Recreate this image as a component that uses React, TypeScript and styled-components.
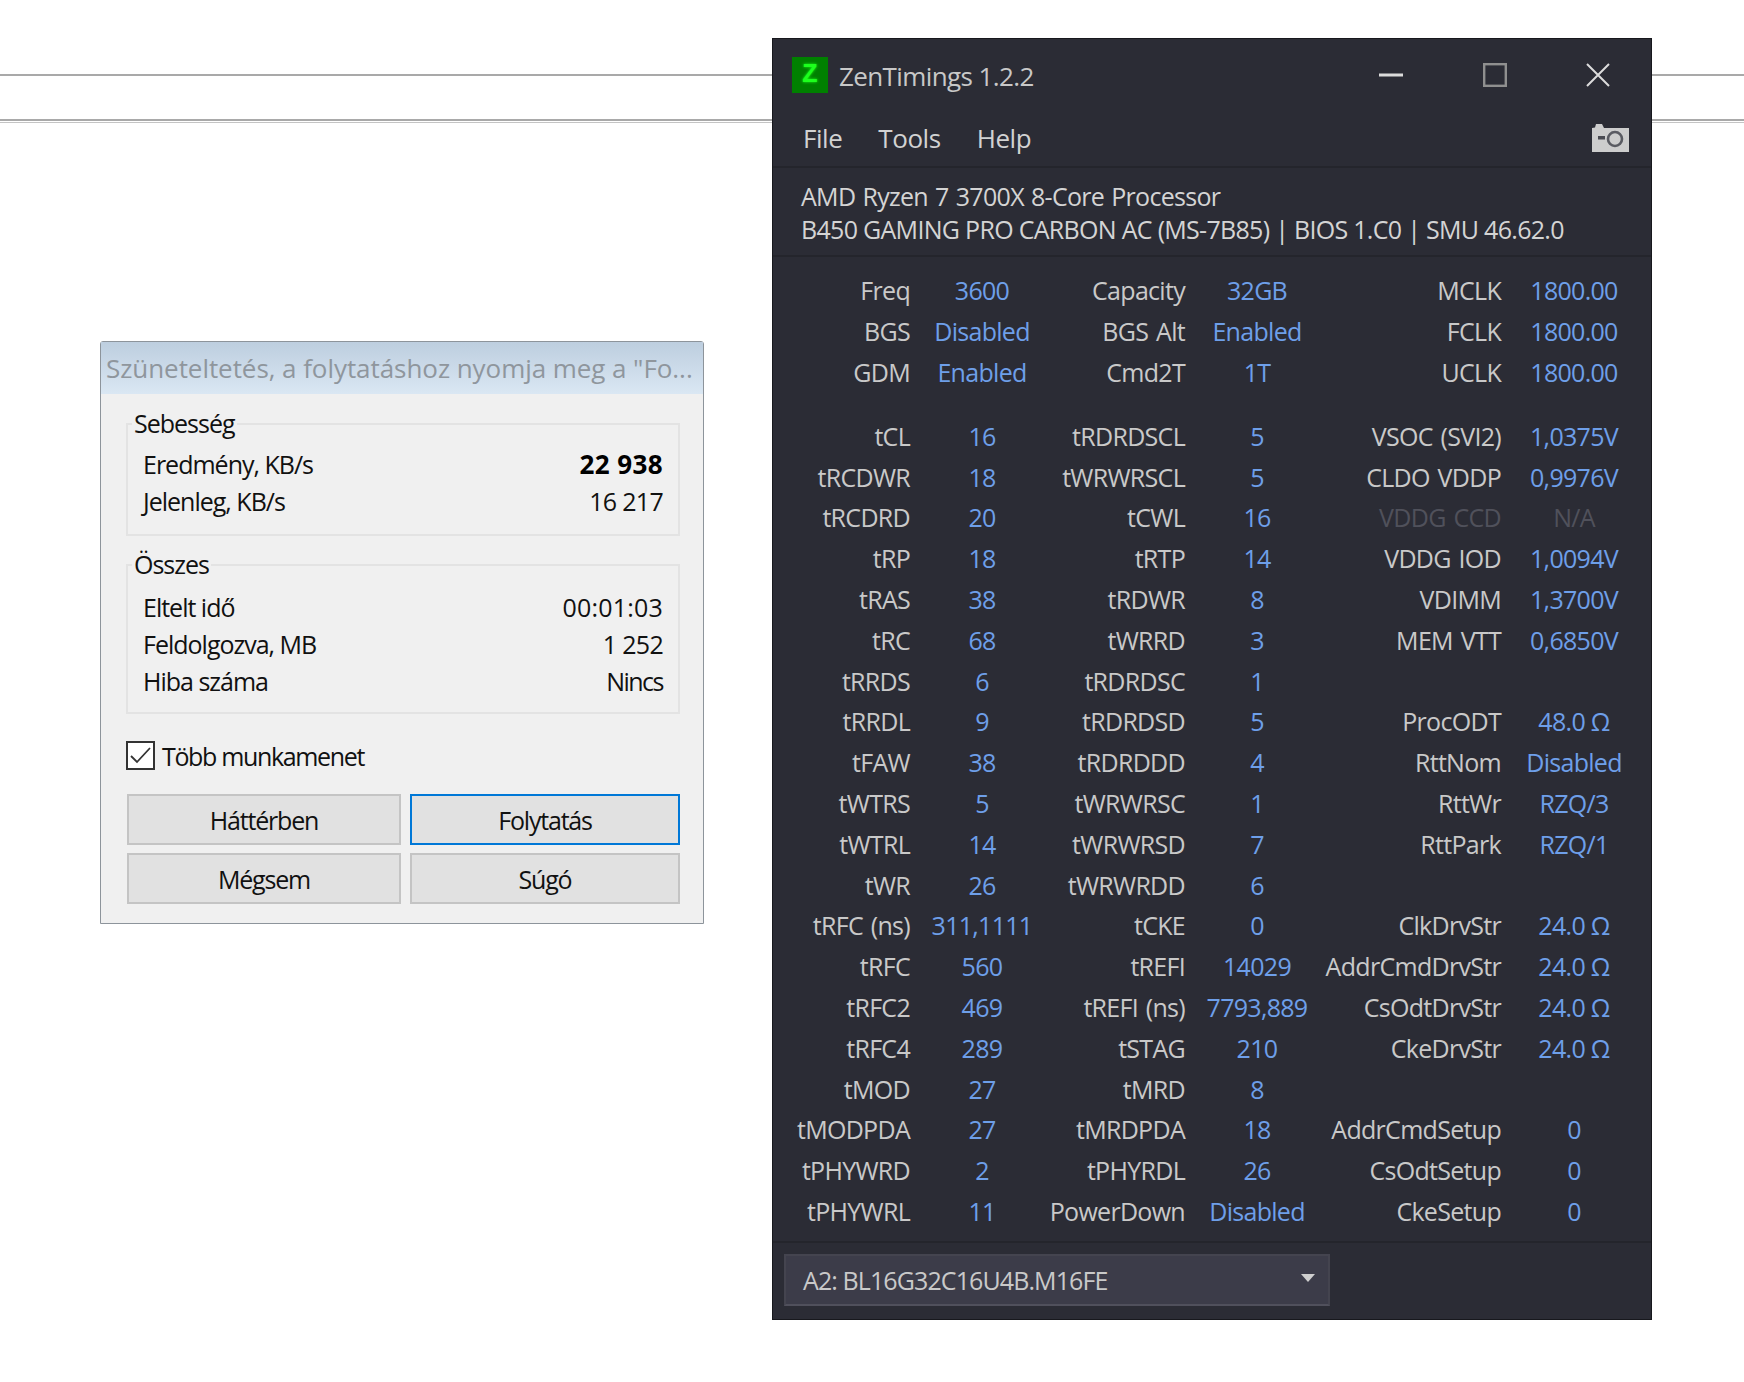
import React from "react";
import styled, { createGlobalStyle } from "styled-components";

const GlobalStyle = createGlobalStyle`
  html, body {
    margin: 0;
    padding: 0;
    background: #fff;
  }
`;

const FONT = `"Open Sans", "Noto Sans", sans-serif`;

const Page = styled.div`
  width: 1744px;
  height: 1382px;
  overflow: hidden;
  display: flex;
  align-items: flex-start;
  font-family: ${FONT};
  background:
    linear-gradient(#a9a9a9, #a9a9a9) 0 74px / 100% 2px no-repeat,
    linear-gradient(#a9a9a9, #a9a9a9) 0 119px / 100% 2px no-repeat,
    linear-gradient(#c4c4c4, #c4c4c4) 0 122px / 100% 1px no-repeat,
    #fff;
`;

/* left dialog */
const Dialog = styled.div`
  width: 604px;
  height: 583px;
  margin: 341px 0 0 100px;
  box-sizing: border-box;
  border: 1px solid #8d949b;
  border-radius: 3px 3px 0 0;
  background: #f0f0f0;
  color: #111;
  font-size: 25px;
  letter-spacing: -1px;
  display: flex;
  flex-direction: column;
`;

const DialogTitle = styled.div`
  height: 52px;
  line-height: 52px;
  padding-left: 5px;
  background: linear-gradient(#bdcedf, #dae7f3);
  color: #8f969d;
  font-size: 26px;
  letter-spacing: -0.06px;
  white-space: nowrap;
  overflow: hidden;
`;

const DialogBody = styled.div`
  padding: 29px 23px 0 25px;
  display: flex;
  flex-direction: column;
`;

const Group = styled.div<{ $gap?: number; $shift?: number }>`
  position: relative;
  margin-top: ${(p) => p.$gap ?? 0}px;
  border: 2px solid #e3e3e3;
  padding: ${(p) => 21 + (p.$shift ?? 0)}px 15px ${(p) => 14 - (p.$shift ?? 0)}px 15px;
`;

const Legend = styled.span`
  position: absolute;
  left: 4px;
  top: -19px;
  padding: 0 2px;
  background: #f0f0f0;
  line-height: 34px;
`;

const StatRow = styled.div`
  display: flex;
  justify-content: space-between;
  height: 37px;
  line-height: 37px;
`;

const StatValue = styled.span<{ $bold?: boolean; $track?: number }>`
  font-weight: ${(p) => (p.$bold ? 700 : 400)};
  font-size: ${(p) => (p.$bold ? "26px" : "inherit")};
  letter-spacing: ${(p) => (p.$bold ? "0.4px" : `${p.$track ?? -0.7}px`)};
  color: ${(p) => (p.$bold ? "#000" : "inherit")};
`;

const CheckRow = styled.label`
  display: flex;
  align-items: center;
  gap: 7px;
  margin-top: 27px;
  height: 29px;
  letter-spacing: -1.35px;
`;

const CheckBox = styled.span`
  width: 29px;
  height: 29px;
  box-sizing: border-box;
  border: 2px solid #333;
  background: #fff;
  display: flex;
  align-items: center;
  justify-content: center;
`;

const ButtonGrid = styled.div`
  display: grid;
  grid-template-columns: 274px 270px;
  grid-auto-rows: 51px;
  column-gap: 9px;
  row-gap: 8px;
  margin-top: 24px;
  margin-left: 1px;
`;

const DlgButton = styled.button<{ $focus?: boolean }>`
  font: inherit;
  letter-spacing: -1.2px;
  color: #111;
  background: #e1e1e1;
  border: ${(p) => (p.$focus ? "2px solid #0078d7" : "2px solid #c4c4c4")};
  padding: 0;
`;

/* ZenTimings window */
const Win = styled.div`
  width: 880px;
  height: 1282px;
  margin: 38px 0 0 68px;
  box-sizing: border-box;
  background: #2b2c35;
  border: 1px solid #17181d;
  color: #cfcfcf;
  font-size: 25px;
  letter-spacing: -0.7px;
  display: flex;
  flex-direction: column;
`;

const TitleBar = styled.div`
  height: 72px;
  flex: none;
  display: flex;
  align-items: center;
  padding: 0 0 0 19px;
  box-sizing: border-box;
`;

const Logo = styled.span`
  width: 36px;
  height: 36px;
  margin-top: -1px;
  background: #008000;
  color: #1dff1d;
  font-family: "Liberation Sans", sans-serif;
  font-weight: 700;
  font-size: 25px;
  line-height: 33px;
  letter-spacing: 0;
  text-align: center;
  text-shadow: 0 0 3px #17ff17;
`;

const TitleText = styled.span`
  margin-left: 11px;
  margin-top: 1px;
  flex: 1;
  font-size: 26px;
  letter-spacing: -0.6px;
  color: #c8c8c8;
`;

const WinControls = styled.div`
  display: flex;
  align-items: center;
`;

const WinControl = styled.span`
  width: 104px;
  display: flex;
  justify-content: center;
  &:last-child {
    width: 102px;
    margin-right: 2px;
  }
`;

const MenuBar = styled.div`
  height: 54px;
  flex: none;
  display: flex;
  align-items: center;
  padding: 0 22px 1px 30px;
  gap: 36px;
  font-size: 26px;
  letter-spacing: -0.45px;
  color: #d2d2d2;
  border-bottom: 2px solid #24252c;
`;

const MenuItem = styled.span``;

const CameraSlot = styled.span`
  margin-left: auto;
  display: flex;
`;

const InfoBlock = styled.div`
  height: 89px;
  flex: none;
  box-sizing: border-box;
  padding: 12px 0 0 28px;
  line-height: 33px;
  color: #d4d4d4;
  border-bottom: 2px solid #24252c;
  white-space: nowrap;
`;

const InfoLine = styled.div<{ $words?: number }>`
  word-spacing: ${(p) => p.$words ?? 0}px;
`;

const Timings = styled.div<{ $top: number }>`
  display: grid;
  grid-template-columns: 137px 144px 131px 144px 172px 146px;
  grid-auto-rows: 40.8px;
  margin-top: ${(p) => p.$top}px;
  align-items: center;
  white-space: nowrap;
  flex: none;
`;

const Label = styled.span<{ $dim?: boolean }>`
  display: flex;
  justify-content: flex-end;
  word-spacing: 2px;
  color: ${(p) => (p.$dim ? "#50515b" : "#c9c9c9")};
`;

const Value = styled.span<{ $dim?: boolean }>`
  display: flex;
  justify-content: center;
  color: ${(p) => (p.$dim ? "#50515b" : "#6e9fe9")};
`;

const BottomBar = styled.div`
  margin-top: 10px;
  flex: 1;
  border-top: 2px solid #24252c;
  padding: 11px 0 0 11px;
`;

const SelectBox = styled.div`
  width: 546px;
  height: 52px;
  box-sizing: border-box;
  background: #3c3c49;
  border: 2px solid #44444f;
  border-bottom-color: #50505c;
  display: flex;
  align-items: center;
  justify-content: space-between;
  padding: 0 13px 0 17px;
  letter-spacing: -0.9px;
  color: #c9c9c9;
`;

const Caret = styled.span`
  width: 0;
  height: 0;
  margin-top: -5px;
  border-left: 7px solid transparent;
  border-right: 7px solid transparent;
  border-top: 8px solid #cfcfcf;
`;

type Cell = [string, string, boolean?];

const topRows: Cell[][] = [
  [["Freq", "3600"], ["Capacity", "32GB"], ["MCLK", "1800.00"]],
  [["BGS", "Disabled"], ["BGS Alt", "Enabled"], ["FCLK", "1800.00"]],
  [["GDM", "Enabled"], ["Cmd2T", "1T"], ["UCLK", "1800.00"]],
];

const mainRows: Cell[][] = [
  [["tCL", "16"], ["tRDRDSCL", "5"], ["VSOC (SVI2)", "1,0375V"]],
  [["tRCDWR", "18"], ["tWRWRSCL", "5"], ["CLDO VDDP", "0,9976V"]],
  [["tRCDRD", "20"], ["tCWL", "16"], ["VDDG CCD", "N/A", true]],
  [["tRP", "18"], ["tRTP", "14"], ["VDDG IOD", "1,0094V"]],
  [["tRAS", "38"], ["tRDWR", "8"], ["VDIMM", "1,3700V"]],
  [["tRC", "68"], ["tWRRD", "3"], ["MEM VTT", "0,6850V"]],
  [["tRRDS", "6"], ["tRDRDSC", "1"], ["", ""]],
  [["tRRDL", "9"], ["tRDRDSD", "5"], ["ProcODT", "48.0 Ω"]],
  [["tFAW", "38"], ["tRDRDDD", "4"], ["RttNom", "Disabled"]],
  [["tWTRS", "5"], ["tWRWRSC", "1"], ["RttWr", "RZQ/3"]],
  [["tWTRL", "14"], ["tWRWRSD", "7"], ["RttPark", "RZQ/1"]],
  [["tWR", "26"], ["tWRWRDD", "6"], ["", ""]],
  [["tRFC (ns)", "311,1111"], ["tCKE", "0"], ["ClkDrvStr", "24.0 Ω"]],
  [["tRFC", "560"], ["tREFI", "14029"], ["AddrCmdDrvStr", "24.0 Ω"]],
  [["tRFC2", "469"], ["tREFI (ns)", "7793,889"], ["CsOdtDrvStr", "24.0 Ω"]],
  [["tRFC4", "289"], ["tSTAG", "210"], ["CkeDrvStr", "24.0 Ω"]],
  [["tMOD", "27"], ["tMRD", "8"], ["", ""]],
  [["tMODPDA", "27"], ["tMRDPDA", "18"], ["AddrCmdSetup", "0"]],
  [["tPHYWRD", "2"], ["tPHYRDL", "26"], ["CsOdtSetup", "0"]],
  [["tPHYWRL", "11"], ["PowerDown", "Disabled"], ["CkeSetup", "0"]],
];

function TimingGrid({ rows, top }: { rows: Cell[][]; top: number }) {
  return (
    <Timings $top={top}>
      {rows.flat().map(([label, value, dim], i) => (
        <React.Fragment key={i}>
          <Label $dim={dim}>{label}</Label>
          <Value $dim={dim}>{value}</Value>
        </React.Fragment>
      ))}
    </Timings>
  );
}

function CameraIcon() {
  return (
    <svg width="37" height="28" viewBox="0 0 37 28">
      <path fill="#cdcdcd" d="M3 3.5 L4 0 H10 L12 4 H37 V28 H0 V4 Z" />
      <rect x="6" y="12" width="7" height="3.5" fill="#4a4b52" />
      <circle cx="23" cy="15" r="7" fill="none" stroke="#5a5b62" strokeWidth="2.6" />
    </svg>
  );
}

export default function App() {
  return (
    <Page>
      <GlobalStyle />
      <Dialog>
        <DialogTitle>Szüneteltetés, a folytatáshoz nyomja meg a "Fo...</DialogTitle>
        <DialogBody>
          <Group>
            <Legend>Sebesség</Legend>
            <StatRow>
              <span>Eredmény, KB/s</span>
              <StatValue $bold>22 938</StatValue>
            </StatRow>
            <StatRow>
              <span>Jelenleg, KB/s</span>
              <StatValue>16 217</StatValue>
            </StatRow>
          </Group>
          <Group $gap={28} $shift={2}>
            <Legend>Összes</Legend>
            <StatRow>
              <span>Eltelt idő</span>
              <StatValue $track={0.2}>00:01:03</StatValue>
            </StatRow>
            <StatRow>
              <span>Feldolgozva, MB</span>
              <StatValue>1 252</StatValue>
            </StatRow>
            <StatRow>
              <span>Hiba száma</span>
              <StatValue $track={-1.5}>Nincs</StatValue>
            </StatRow>
          </Group>
          <CheckRow>
            <CheckBox>
              <svg width="21" height="17" viewBox="0 0 21 17">
                <path d="M1 9 L7 15 L20 1" fill="none" stroke="#333" strokeWidth="1.8" />
              </svg>
            </CheckBox>
            Több munkamenet
          </CheckRow>
          <ButtonGrid>
            <DlgButton>Háttérben</DlgButton>
            <DlgButton $focus>Folytatás</DlgButton>
            <DlgButton>Mégsem</DlgButton>
            <DlgButton>Súgó</DlgButton>
          </ButtonGrid>
        </DialogBody>
      </Dialog>

      <Win>
        <TitleBar>
          <Logo>Z</Logo>
          <TitleText>ZenTimings 1.2.2</TitleText>
          <WinControls>
            <WinControl>
              <svg width="24" height="4" viewBox="0 0 24 4">
                <rect width="24" height="3" y="0.5" fill="#dcdcdc" />
              </svg>
            </WinControl>
            <WinControl>
              <svg width="24" height="24" viewBox="0 0 24 24">
                <rect x="1.2" y="1.2" width="21.6" height="21.6" fill="none" stroke="#8f8f8f" strokeWidth="2.4" />
              </svg>
            </WinControl>
            <WinControl>
              <svg width="24" height="24" viewBox="0 0 24 24">
                <path d="M1 1 L23 23 M23 1 L1 23" stroke="#dcdcdc" strokeWidth="2" />
              </svg>
            </WinControl>
          </WinControls>
        </TitleBar>
        <MenuBar>
          <MenuItem>File</MenuItem>
          <MenuItem>Tools</MenuItem>
          <MenuItem>Help</MenuItem>
          <CameraSlot>
            <CameraIcon />
          </CameraSlot>
        </MenuBar>
        <InfoBlock>
          <InfoLine $words={1.3}>AMD Ryzen 7 3700X 8-Core Processor</InfoLine>
          <InfoLine>B450 GAMING PRO CARBON AC (MS-7B85) | BIOS 1.C0 | SMU 46.62.0</InfoLine>
        </InfoBlock>
        <TimingGrid rows={topRows} top={13} />
        <TimingGrid rows={mainRows} top={23} />
        <BottomBar>
          <SelectBox>
            A2: BL16G32C16U4B.M16FE
            <Caret />
          </SelectBox>
        </BottomBar>
      </Win>
    </Page>
  );
}
